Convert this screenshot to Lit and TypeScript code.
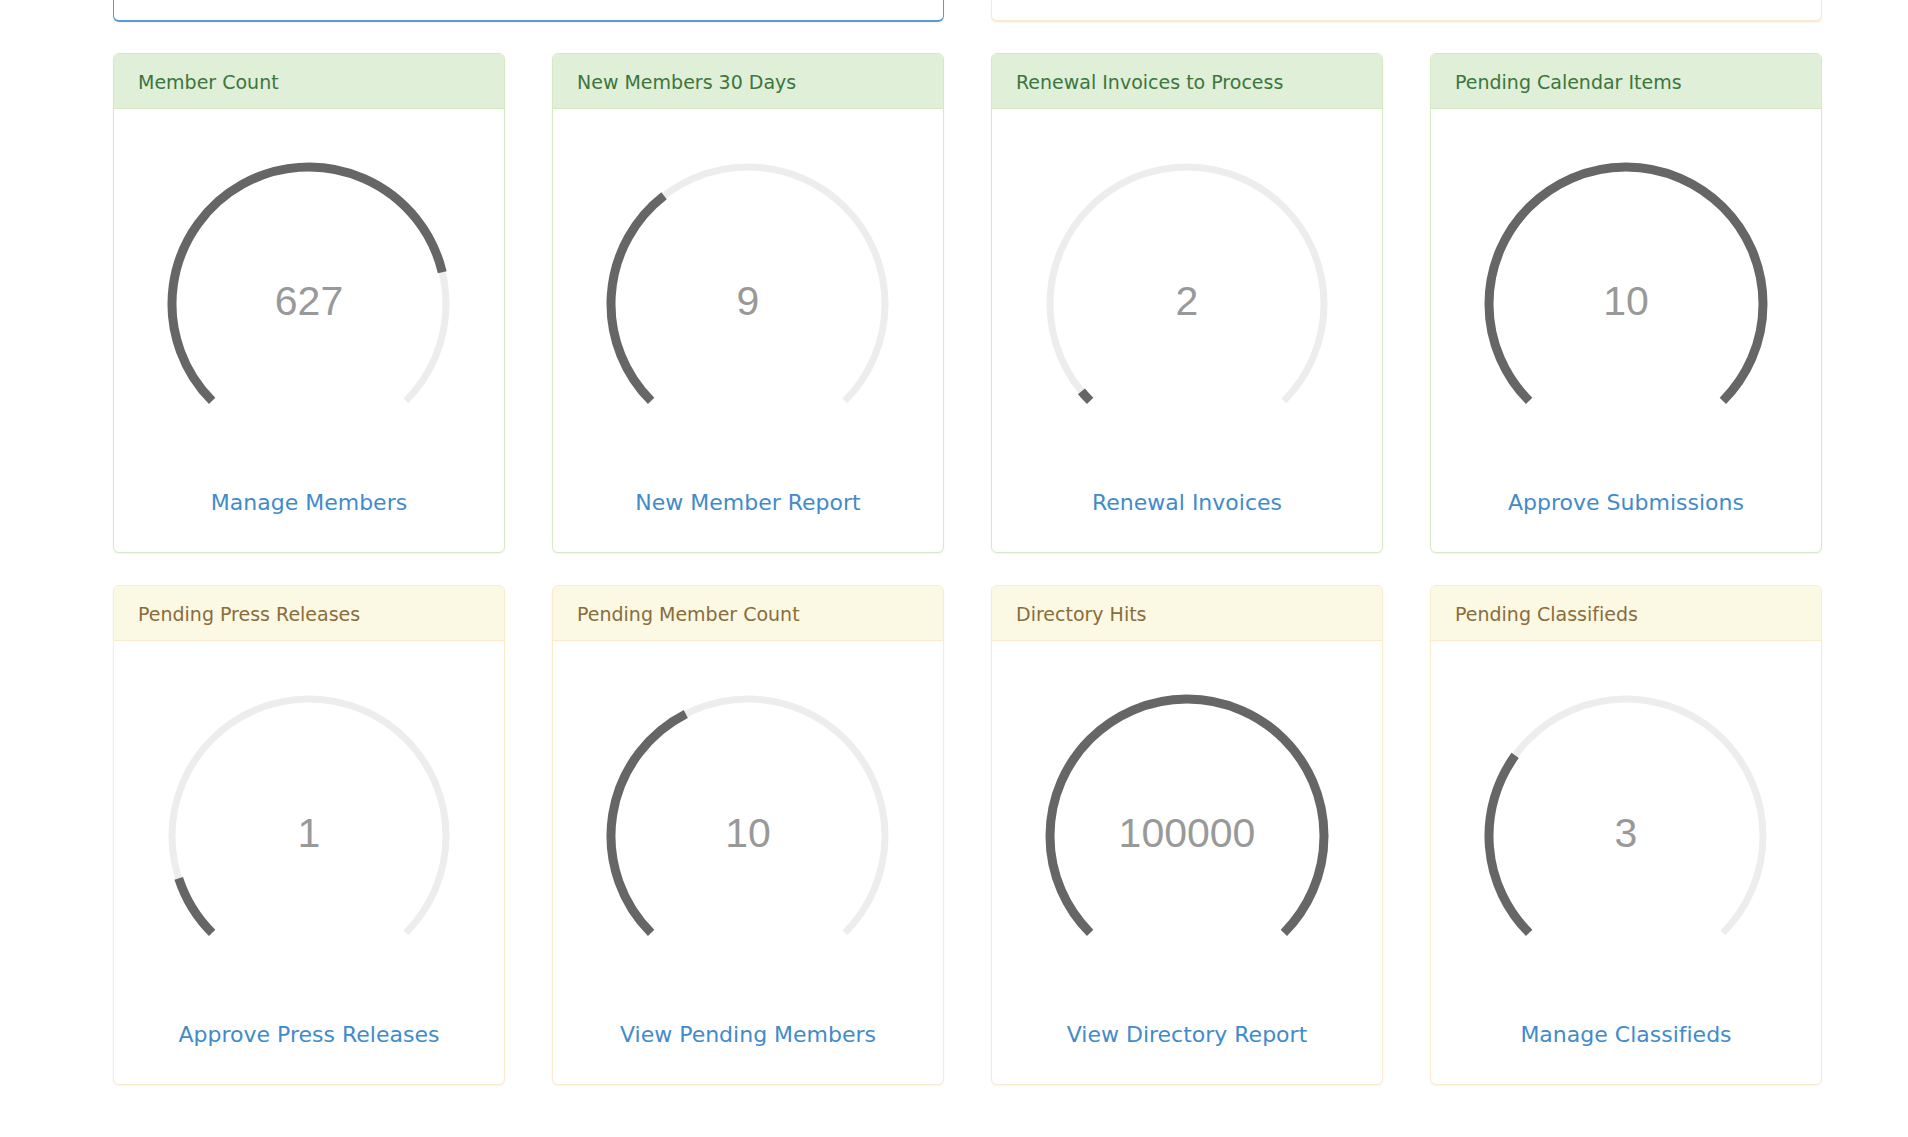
import { LitElement, html, svg, css } from "lit";
import { customElement, property } from "lit/decorators.js";
import { classMap } from "lit/directives/class-map.js";

type Tone = "success" | "warning";

interface Stat {
  title: string;
  value: number;
  max: number;
  link: string;
  tone: Tone;
}

const STATS: Stat[] = [
  { title: "Member Count", value: 627, max: 800, link: "Manage Members", tone: "success" },
  { title: "New Members 30 Days", value: 9, max: 25, link: "New Member Report", tone: "success" },
  { title: "Renewal Invoices to Process", value: 2, max: 100, link: "Renewal Invoices", tone: "success" },
  { title: "Pending Calendar Items", value: 10, max: 10, link: "Approve Submissions", tone: "success" },
  { title: "Pending Press Releases", value: 1, max: 10, link: "Approve Press Releases", tone: "warning" },
  { title: "Pending Member Count", value: 10, max: 25, link: "View Pending Members", tone: "warning" },
  { title: "Directory Hits", value: 100000, max: 100000, link: "View Directory Report", tone: "warning" },
  { title: "Pending Classifieds", value: 3, max: 10, link: "Manage Classifieds", tone: "warning" },
];

const CX = 172;
const CY = 171;
const RADIUS = 137;
const START = 135;
const SWEEP = 270;

/** Arc that opens at the bottom and covers the given share of the sweep. */
function arc(share: number): string {
  const point = (deg: number) => {
    const rad = (deg * Math.PI) / 180;
    return `${(CX + RADIUS * Math.cos(rad)).toFixed(2)} ${(CY + RADIUS * Math.sin(rad)).toFixed(2)}`;
  };
  const span = SWEEP * Math.min(1, share);
  return `M ${point(START)} A ${RADIUS} ${RADIUS} 0 ${span > 180 ? 1 : 0} 1 ${point(START + span)}`;
}

@customElement("stat-gauge")
export class StatGauge extends LitElement {
  @property({ type: Number }) value = 0;
  @property({ type: Number }) max = 100;

  static styles = css`
    :host {
      display: block;
    }
    .gauge {
      display: block;
      width: 100%;
      max-width: 400px;
      margin: 0 auto;
    }
    .track {
      fill: none;
      stroke: #ededed;
      stroke-width: 7;
    }
    .level {
      fill: none;
      stroke: #666;
      stroke-width: 9;
    }
    .value {
      fill: #999;
      font: 41px "Liberation Sans", Arial, sans-serif;
      text-anchor: middle;
    }
  `;

  render() {
    return html`
      <svg class="gauge" viewBox="0 0 344 342">
        ${svg`
          <path class="track" d=${arc(1)}></path>
          <path class="level" d=${arc(this.value / this.max)}></path>
          <text class="value" x=${CX} y="182">${this.value}</text>
        `}
      </svg>
    `;
  }
}

@customElement("app-root")
export class AppRoot extends LitElement {
  static styles = css`
    :host {
      display: block;
      font-family: Verdana, "DejaVu Sans", sans-serif;
      font-variant-ligatures: none;
      background: #fff;
    }
    .page {
      display: grid;
      gap: 31px;
      padding: 0 86px 52px 113px;
    }
    .row {
      display: grid;
      gap: 32px 47px;
    }
    .halves {
      grid-template-columns: repeat(2, minmax(0, 1fr));
    }
    .quarters {
      grid-template-columns: repeat(4, minmax(0, 1fr));
    }
    .panel {
      border: 1px solid;
      border-radius: 6px;
      background: #fff;
      box-shadow: 0 1px 2px rgba(0, 0, 0, 0.05);
      overflow: hidden;
    }
    .tail {
      border-width: 0 1px 2px;
      border-radius: 0 0 6px 6px;
      padding-top: 20px;
    }
    .primary {
      border-color: #5b9bd3;
    }
    .success {
      border-color: #d6e9c6;
    }
    .warning {
      border-color: #faebcc;
    }
    .title {
      margin: 0;
      padding: 17px 24px 14px;
      border-bottom: 1px solid;
      border-color: inherit;
      font-size: 19px;
      font-weight: 400;
      line-height: 23px;
    }
    .success .title {
      color: #3c763d;
      background: #dfefd8;
    }
    .warning .title {
      color: #8a6d3b;
      background: #fbf8e3;
    }
    .body {
      padding: 24px 23px 35px;
      text-align: center;
    }
    .link {
      display: inline-block;
      margin-top: 14px;
      color: #428bca;
      font-size: 22px;
      line-height: 28px;
      text-decoration: none;
    }
    .link:hover {
      text-decoration: underline;
    }
  `;

  render() {
    return html`
      <main class="page">
        <div class="row halves">
          <section class="panel tail primary"></section>
          <section class="panel tail warning"></section>
        </div>
        <div class="row quarters">
          ${STATS.map(
            (s) => html`
              <section class=${classMap({ panel: true, [s.tone]: true })}>
                <h3 class="title">${s.title}</h3>
                <div class="body">
                  <stat-gauge .value=${s.value} .max=${s.max}></stat-gauge>
                  <a class="link" href="#">${s.link}</a>
                </div>
              </section>
            `
          )}
        </div>
      </main>
    `;
  }
}
